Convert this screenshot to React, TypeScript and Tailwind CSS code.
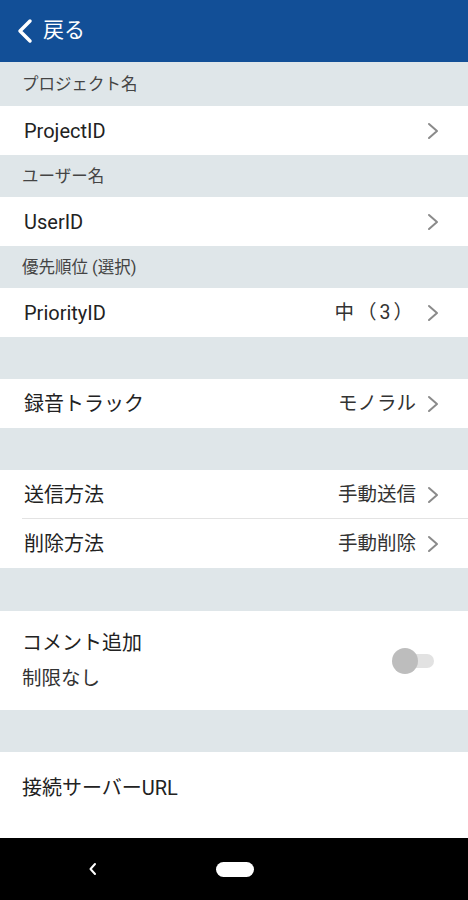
import React from "react";

const font = { fontFamily: 'Roboto, "Noto Sans CJK JP", "Noto Sans", sans-serif' };

function Chevron() {
  return (
    <svg width="14" height="20" viewBox="0 0 14 20" className="ml-[10px] shrink-0">
      <path d="M3 3 L11 10 L3 17" fill="none" stroke="#8a8a8a" strokeWidth="2" strokeLinecap="round" strokeLinejoin="round" />
    </svg>
  );
}

function SectionHeader({ label, h = "h-[43px]" }: { label?: string; h?: string }) {
  return (
    <div className={`${h} bg-[#dfe6e9] flex items-center pl-[22px] pt-[3px] text-[16.5px] text-[#444]`}>{label}</div>
  );
}

function Row({ label, value, divider = false, valueClass = "" }: { label: string; value?: string; divider?: boolean; valueClass?: string }) {
  return (
    <div className="h-[49px] bg-white flex items-center pl-[24px] pr-[28px] relative">
      <div className="flex-1 text-[20px] text-[#222]">{label}</div>
      {value && <div className={`text-[19.5px] text-[#333] ${valueClass}`}>{value}</div>}
      <Chevron />
      {divider && <div className="absolute left-[22px] right-0 bottom-0 h-px bg-[#e3e3e3]" />}
    </div>
  );
}

export default function App() {
  return (
    <div className="w-[468px] h-[900px] flex flex-col bg-[#dfe6e9] overflow-hidden" style={font}>
      <div className="h-[62px] bg-[#124f97] flex items-center pl-[16px] shrink-0">
        <svg width="18" height="26" viewBox="0 0 18 26">
          <path d="M14 3 L4 13 L14 23" fill="none" stroke="white" strokeWidth="3.5" strokeLinecap="round" strokeLinejoin="round" />
        </svg>
        <span className="text-white text-[21px] ml-[9px]">戻る</span>
      </div>
      <SectionHeader label="プロジェクト名" h="h-[44px]" />
      <Row label="ProjectID" />
      <SectionHeader label="ユーザー名" h="h-[42px]" />
      <Row label="UserID" />
      <SectionHeader label="優先順位 (選択)" h="h-[42px]" />
      <Row label="PriorityID" value="中（3）" valueClass="tracking-[3px]" />
      <SectionHeader h="h-[42px]" />
      <Row label="録音トラック" value="モノラル" />
      <SectionHeader h="h-[42px]" />
      <Row label="送信方法" value="手動送信" divider />
      <Row label="削除方法" value="手動削除" />
      <SectionHeader h="h-[43px]" />
      <div className="h-[99px] bg-white flex items-center pl-[22px] pr-[34px]">
        <div className="flex-1 flex flex-col">
          <span className="text-[20px] text-[#222] leading-[26px]">コメント追加</span>
          <span className="text-[19.5px] text-[#333] leading-[26px] mt-[10px]">制限なし</span>
        </div>
        <div className="relative w-[42px] h-[28px] flex items-center">
          <div className="absolute left-[6px] right-0 h-[14px] rounded-full bg-[#e2e2e2]" />
          <div className="absolute left-0 w-[26px] h-[26px] rounded-full bg-[#bdbdbd]" />
        </div>
      </div>
      <SectionHeader h="h-[42px]" />
      <div className="h-[86px] bg-white flex items-start pt-[21px] pl-[22px] text-[20px] text-[#222]">接続サーバーURL</div>
      <div className="flex-1 bg-black flex items-center">
        <div className="w-[180px] flex justify-end pr-[82px]">
          <svg width="10" height="14" viewBox="0 0 10 14">
            <path d="M7 2 L2.5 7 L7 12" fill="none" stroke="white" strokeWidth="2" strokeLinecap="round" strokeLinejoin="round" />
          </svg>
        </div>
        <div className="ml-[36px] w-[38px] h-[15px] rounded-full bg-white" />
      </div>
    </div>
  );
}
